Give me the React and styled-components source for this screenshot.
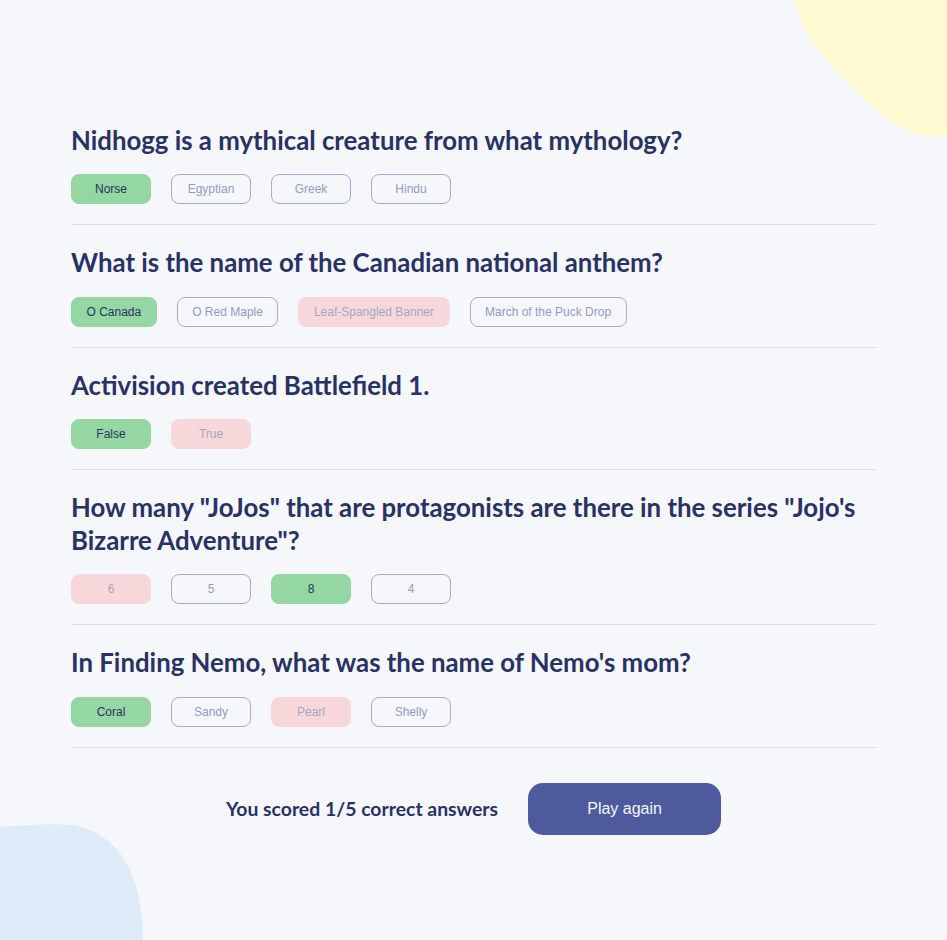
import React from "react";
import styled, { createGlobalStyle } from "styled-components";

const GlobalStyle = createGlobalStyle`
  html, body { margin: 0; padding: 0; background: #F5F7FB; }
  * { box-sizing: border-box; }
`;

const Page = styled.div`
  position: relative;
  min-height: 940px;
  overflow: hidden;
  background: #F5F7FB;
  padding-top: 123.5px;
`;

const BlobTop = styled.svg`
  position: absolute;
  top: 0;
  right: 0;
  width: 152px;
  height: 140px;
`;

const BlobBottom = styled.svg`
  position: absolute;
  bottom: 0;
  left: 0;
  width: 146px;
  height: 116px;
`;

const Quiz = styled.main`
  position: relative;
  width: 805px;
  margin: 0 auto;
`;

const Question = styled.section`
  padding-top: ${(p) => (p.$first ? "0" : "21px")};
  padding-bottom: 20px;
  border-bottom: 1px solid #DBDEF0;
`;

const Title = styled.h2`
  margin: 0 0 18px;
  font-family: "Lato", sans-serif;
  font-weight: 700;
  font-size: 25.8px;
  line-height: 32.5px;
  color: #293264;
`;

const Answers = styled.div`
  display: flex;
  gap: 20px;
`;

const variants = {
  correct: "background:#94D7A2;border-color:#94D7A2;color:#293264;",
  wrong: "background:#F8D7DA;border-color:#F8D7DA;color:#A3A8C6;",
  neutral: "background:transparent;border-color:#A4ABD7;color:#959AC0;",
};

const Answer = styled.span`
  display: inline-flex;
  align-items: center;
  justify-content: center;
  min-width: 80px;
  height: 30px;
  padding: 0 14.5px;
  border: 1px solid;
  border-radius: 8px;
  font-family: "Liberation Sans", Arial, sans-serif;
  font-size: 12px;
  ${(p) => variants[p.$kind]}
`;

const Footer = styled.div`
  display: flex;
  justify-content: center;
  align-items: center;
  gap: 30px;
  margin-top: 35px;
`;

const Score = styled.span`
  font-family: "Lato", sans-serif;
  font-weight: 700;
  font-size: 19.4px;
  color: #293264;
`;

const PlayButton = styled.button`
  width: 193px;
  height: 52px;
  border: none;
  border-radius: 15px;
  background: #4D5B9E;
  color: #F5F7FB;
  font-family: "Liberation Sans", Arial, sans-serif;
  font-size: 16px;
  cursor: pointer;
`;

const questions = [
  {
    q: "Nidhogg is a mythical creature from what mythology?",
    a: [["Norse", "correct"], ["Egyptian", "neutral"], ["Greek", "neutral"], ["Hindu", "neutral"]],
  },
  {
    q: "What is the name of the Canadian national anthem?",
    a: [["O Canada", "correct"], ["O Red Maple", "neutral"], ["Leaf-Spangled Banner", "wrong"], ["March of the Puck Drop", "neutral"]],
  },
  {
    q: "Activision created Battlefield 1.",
    a: [["False", "correct"], ["True", "wrong"]],
  },
  {
    q: 'How many "JoJos" that are protagonists are there in the series "Jojo\'s Bizarre Adventure"?',
    a: [["6", "wrong"], ["5", "neutral"], ["8", "correct"], ["4", "neutral"]],
  },
  {
    q: "In Finding Nemo, what was the name of Nemo's mom?",
    a: [["Coral", "correct"], ["Sandy", "neutral"], ["Pearl", "wrong"], ["Shelly", "neutral"]],
  },
];

export default function App() {
  return (
    <Page>
      <GlobalStyle />
      <BlobTop viewBox="0 0 152 140">
        <path d="M0,0 C4,28 22,52 48,78 C78,108 104,137 146,137 L152,137 L152,0 Z" fill="#FFFAD1" />
      </BlobTop>
      <BlobBottom viewBox="0 0 146 116">
        <path d="M0,3 C30,1 52,-1 72,1 C118,8 143,50 143,116 L0,116 Z" fill="#DEEBF8" />
      </BlobBottom>
      <Quiz>
        {questions.map((item, i) => (
          <Question key={i} $first={i === 0}>
            <Title>{item.q}</Title>
            <Answers>
              {item.a.map(([text, kind]) => (
                <Answer key={text} $kind={kind}>{text}</Answer>
              ))}
            </Answers>
          </Question>
        ))}
        <Footer>
          <Score>You scored 1/5 correct answers</Score>
          <PlayButton>Play again</PlayButton>
        </Footer>
      </Quiz>
    </Page>
  );
}
